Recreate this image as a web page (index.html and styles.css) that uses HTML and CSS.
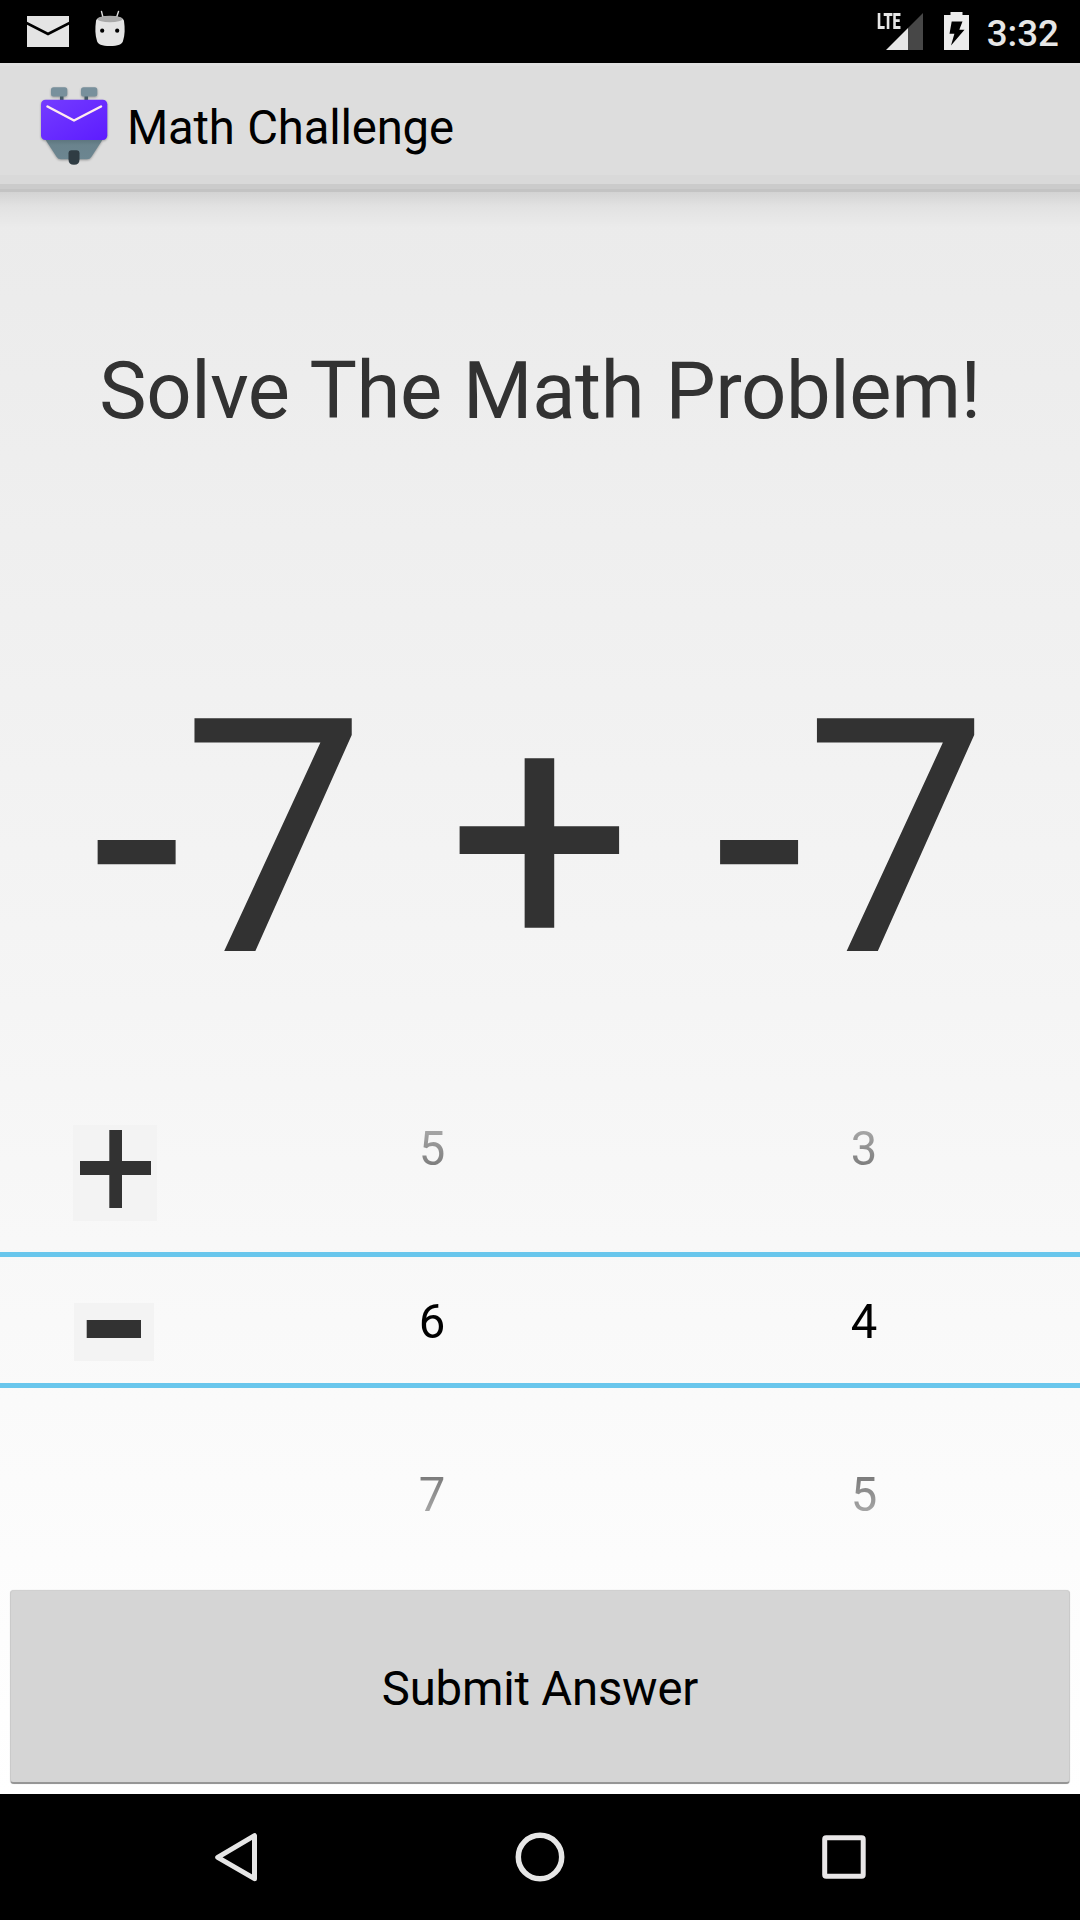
FILE: index.html
```html
<!DOCTYPE html>
<html lang="en">
<head>
<meta charset="utf-8">
<title>Math Challenge</title>
<link rel="stylesheet" href="styles.css">
</head>
<body>
<div class="screen">
  <header class="status-bar">
    <svg class="icon-mail" width="42" height="31" viewBox="0 0 42 31">
      <path fill="#e4e4e4" d="M0 0h42v31H0z"/>
      <path fill="none" stroke="#000" stroke-width="2.6" d="M-1 6.7 21 18 43 6.7"/>
    </svg>
    <svg class="icon-robot" width="32" height="37" viewBox="0 0 32 37">
      <path stroke="#dcdcdc" stroke-width="1.4" stroke-linecap="round" d="M7.500 1.500 9 7.500M24.500 1.500 22.500 7.500"/>
      <path fill="#e4e4e4" d="M2 11C2 8 8 6 16 6s14 2 14 5c1 7 1 14-1 20-.5 3-5 5-13 5S3.500 34 3 31C1 25 1 18 2 11z"/>
      <ellipse fill="#a9a9a9" cx="16" cy="9" rx="12.500" ry="3.300"/>
      <circle cx="8.200" cy="20.700" r="2.100"/>
      <circle cx="23.200" cy="20.700" r="2.100"/>
    </svg>
    <div class="status-right">
      <div class="signal">
        <span class="lte">LTE</span>
        <svg width="37" height="37" viewBox="0 0 37 37">
          <path fill="#474747" d="M37 0v37H22V15z"/>
          <path fill="#e6e6e6" d="M22 15v22H0z"/>
        </svg>
      </div>
      <svg class="icon-battery" width="25" height="38" viewBox="0 0 25 38">
        <path fill="#ececec" d="M6.500 0h12v3H25v35H0V3h6.500z"/>
        <path d="M7.700 9.500h10.800l-3.200 8.300H20.500L7 33.500l3.400-11.800H5.500z"/>
      </svg>
      <span class="clock">3:32</span>
    </div>
  </header>

  <div class="action-bar">
    <svg class="app-logo" width="76" height="86" viewBox="0 0 76 86">
      <defs>
        <linearGradient id="body" x1="0" y1="0" x2="1" y2="1">
          <stop offset="0" stop-color="#743cff"/><stop offset="1" stop-color="#5d1cff"/>
        </linearGradient>
        <linearGradient id="base" x1="0" y1="0" x2="0" y2="1">
          <stop offset="0" stop-color="#5b737c"/><stop offset=".3" stop-color="#6a838d"/><stop offset="1" stop-color="#6c8691"/>
        </linearGradient>
      </defs>
      <g class="logo-shape">
        <path fill="#455a64" d="M25 14h3.500v8H25zM49.500 14H53v8h-3.500z"/>
        <rect fill="#78909c" x="16" y="5.300" width="16.300" height="9.300" rx="2.500"/>
        <rect fill="#78909c" x="46" y="5.300" width="16.300" height="9.300" rx="2.500"/>
        <path fill="url(#base)" d="M10 57h58L56.500 74.800Q55 77.300 52 77.300H26Q23 77.300 21.500 74.800z"/>
        <rect fill="url(#body)" x="6" y="17.800" width="66.300" height="40.300" rx="4.500"/>
      </g>
      <path fill="none" stroke="#ffebee" stroke-width="2.500" stroke-linecap="round" stroke-linejoin="round" d="M12.500 24.500 39 38.500 66 24.500"/>
      <path fill="#2f3c43" d="M33.500 71.300q0-3 3-3h5q3 0 3 3v6q0 5.500-5.500 5.500t-5.500-5.500z"/>
    </svg>
    <h1 class="app-title">Math Challenge</h1>
  </div>

  <main class="content">
    <h2 class="prompt">Solve The Math Problem!</h2>
    <div class="problem">-7 + -7</div>
    <div class="pickers">
      <div class="sign">
        <svg width="84" height="96" viewBox="0 0 84 96">
          <path fill="#f3f3f3" d="M0 0h84v96H0z"/>
          <path fill="#323232" d="M36.300 5H49v31h29v14H49v33H36.300V50H7V36h29.300z"/>
        </svg>
        <svg class="minus" width="80" height="58" viewBox="0 0 80 58">
          <path fill="#f3f3f3" d="M0 0h80v58H0z"/>
          <path fill="#323232" d="M12.700 17H67v18H12.700z"/>
        </svg>
      </div>
      <div class="picker"><span>5</span><span>6</span><span>7</span></div>
      <div class="picker"><span>3</span><span>4</span><span>5</span></div>
      <div class="selection"></div>
    </div>
    <button class="submit">Submit Answer</button>
  </main>

  <nav class="nav-bar">
    <svg width="44" height="52" viewBox="0 0 44 52"><path fill="none" stroke="#e6e6e6" stroke-width="5" stroke-linejoin="round" d="M3.700 26.300 40.500 4.700v43z"/></svg>
    <svg width="50" height="50" viewBox="0 0 50 50"><circle fill="none" stroke="#e6e6e6" stroke-width="5.500" cx="25" cy="25" r="21.700"/></svg>
    <svg width="44" height="44" viewBox="0 0 44 44"><rect fill="none" stroke="#e9e7e8" stroke-width="5" x="2.700" y="2.700" width="38.500" height="38.500" rx="1.500"/></svg>
  </nav>
</div>
</body>
</html>
```
FILE: styles.css
```css
* { box-sizing: border-box; }

body {
  margin: 0;
  font-family: Roboto, sans-serif;
  color: #000;
}

svg { display: block; flex: none; }

.screen {
  width: 1080px;
  height: 1920px;
  display: flex;
  flex-direction: column;
  overflow: hidden;
  background: linear-gradient(#e9e9e9 63px, #fff 1794px);
}

.status-bar {
  height: 63px;
  flex: none;
  display: flex;
  align-items: flex-start;
  padding: 0 21px 0 27px;
  background: #000;
  color: #e6e6e6;
}
.icon-mail { margin-top: 16px; }
.icon-robot { margin: 10px 0 0 25px; }
.status-right { margin-left: auto; display: flex; }
.signal { position: relative; padding-top: 13px; }
.lte {
  position: absolute;
  left: -9px;
  top: 14px;
  font-size: 22px;
  font-weight: 900;
  line-height: 16px;
  transform: scaleX(.66);
  transform-origin: 0 0;
}
.icon-battery { margin: 12px 0 0 21px; }
.clock {
  margin-left: 18px;
  font-size: 36.75px;
  font-weight: 500;
  line-height: 67px;
}

.action-bar {
  height: 129px;
  flex: none;
  display: flex;
  padding-left: 35px;
  background: linear-gradient(#e0e0e0 3px, #ddd 3px 112px, #d9d9d9 112px 121px, #cbcbcb 121px 126px, #c3c3c3 126px);
}
.app-logo { margin-top: 19px; }
.logo-shape { filter: drop-shadow(0 1px 1px rgba(0, 0, 0, .3)); }
.app-title {
  margin: 0 0 0 16px;
  font-size: 47.25px;
  font-weight: 400;
  letter-spacing: -.18px;
  word-spacing: 1px;
  line-height: 130px;
}

.content {
  flex: 1;
  display: flex;
  flex-direction: column;
  background: linear-gradient(rgba(0, 0, 0, .1), rgba(0, 0, 0, .04) 14px, rgba(0, 0, 0, 0) 36px);
}
.prompt {
  margin: 0;
  height: 394px;
  color: #323232;
  font-size: 79.6px;
  font-weight: 400;
  letter-spacing: -.4px;
  word-spacing: 2px;
  line-height: 397px;
  text-align: center;
}
.problem {
  height: 474px;
  color: #323232;
  font-size: 327.3px;
  line-height: 506px;
  text-align: center;
  white-space: nowrap;
}

.pickers {
  position: relative;
  height: 520px;
  display: grid;
  grid-template-columns: 216px 432px 432px;
}
.sign { padding: 65px 0 0 73px; }
.minus { margin: 82px 0 0 1px; }
.picker {
  display: flex;
  flex-direction: column;
  padding-top: 3px;
  font-size: 47.25px;
  line-height: 173px;
  text-align: center;
  mask-image: linear-gradient(transparent, #000 215px, #000 315px, transparent 522px);
}
.selection {
  position: absolute;
  left: 0;
  right: 0;
  top: 192px;
  height: 136px;
  border: solid #69c6ec;
  border-width: 5px 0;
}

.submit {
  height: 194px;
  margin: 10px 10px 0 10px;
  padding: 5px 0 0;
  border: 1px solid #cacaca;
  border-top: 1px solid #d0d0d0;
  border-bottom: 2px solid #969696;
  border-radius: 4px;
  background: #d5d5d5;
  box-shadow: 0 0 1px rgba(0, 0, 0, .2);
  color: #000;
  font: 47.25px Roboto, sans-serif;
  letter-spacing: -.18px;
}

.nav-bar {
  height: 126px;
  flex: none;
  display: flex;
  align-items: center;
  justify-content: space-between;
  padding: 0 214px;
  background: #000;
}
```
